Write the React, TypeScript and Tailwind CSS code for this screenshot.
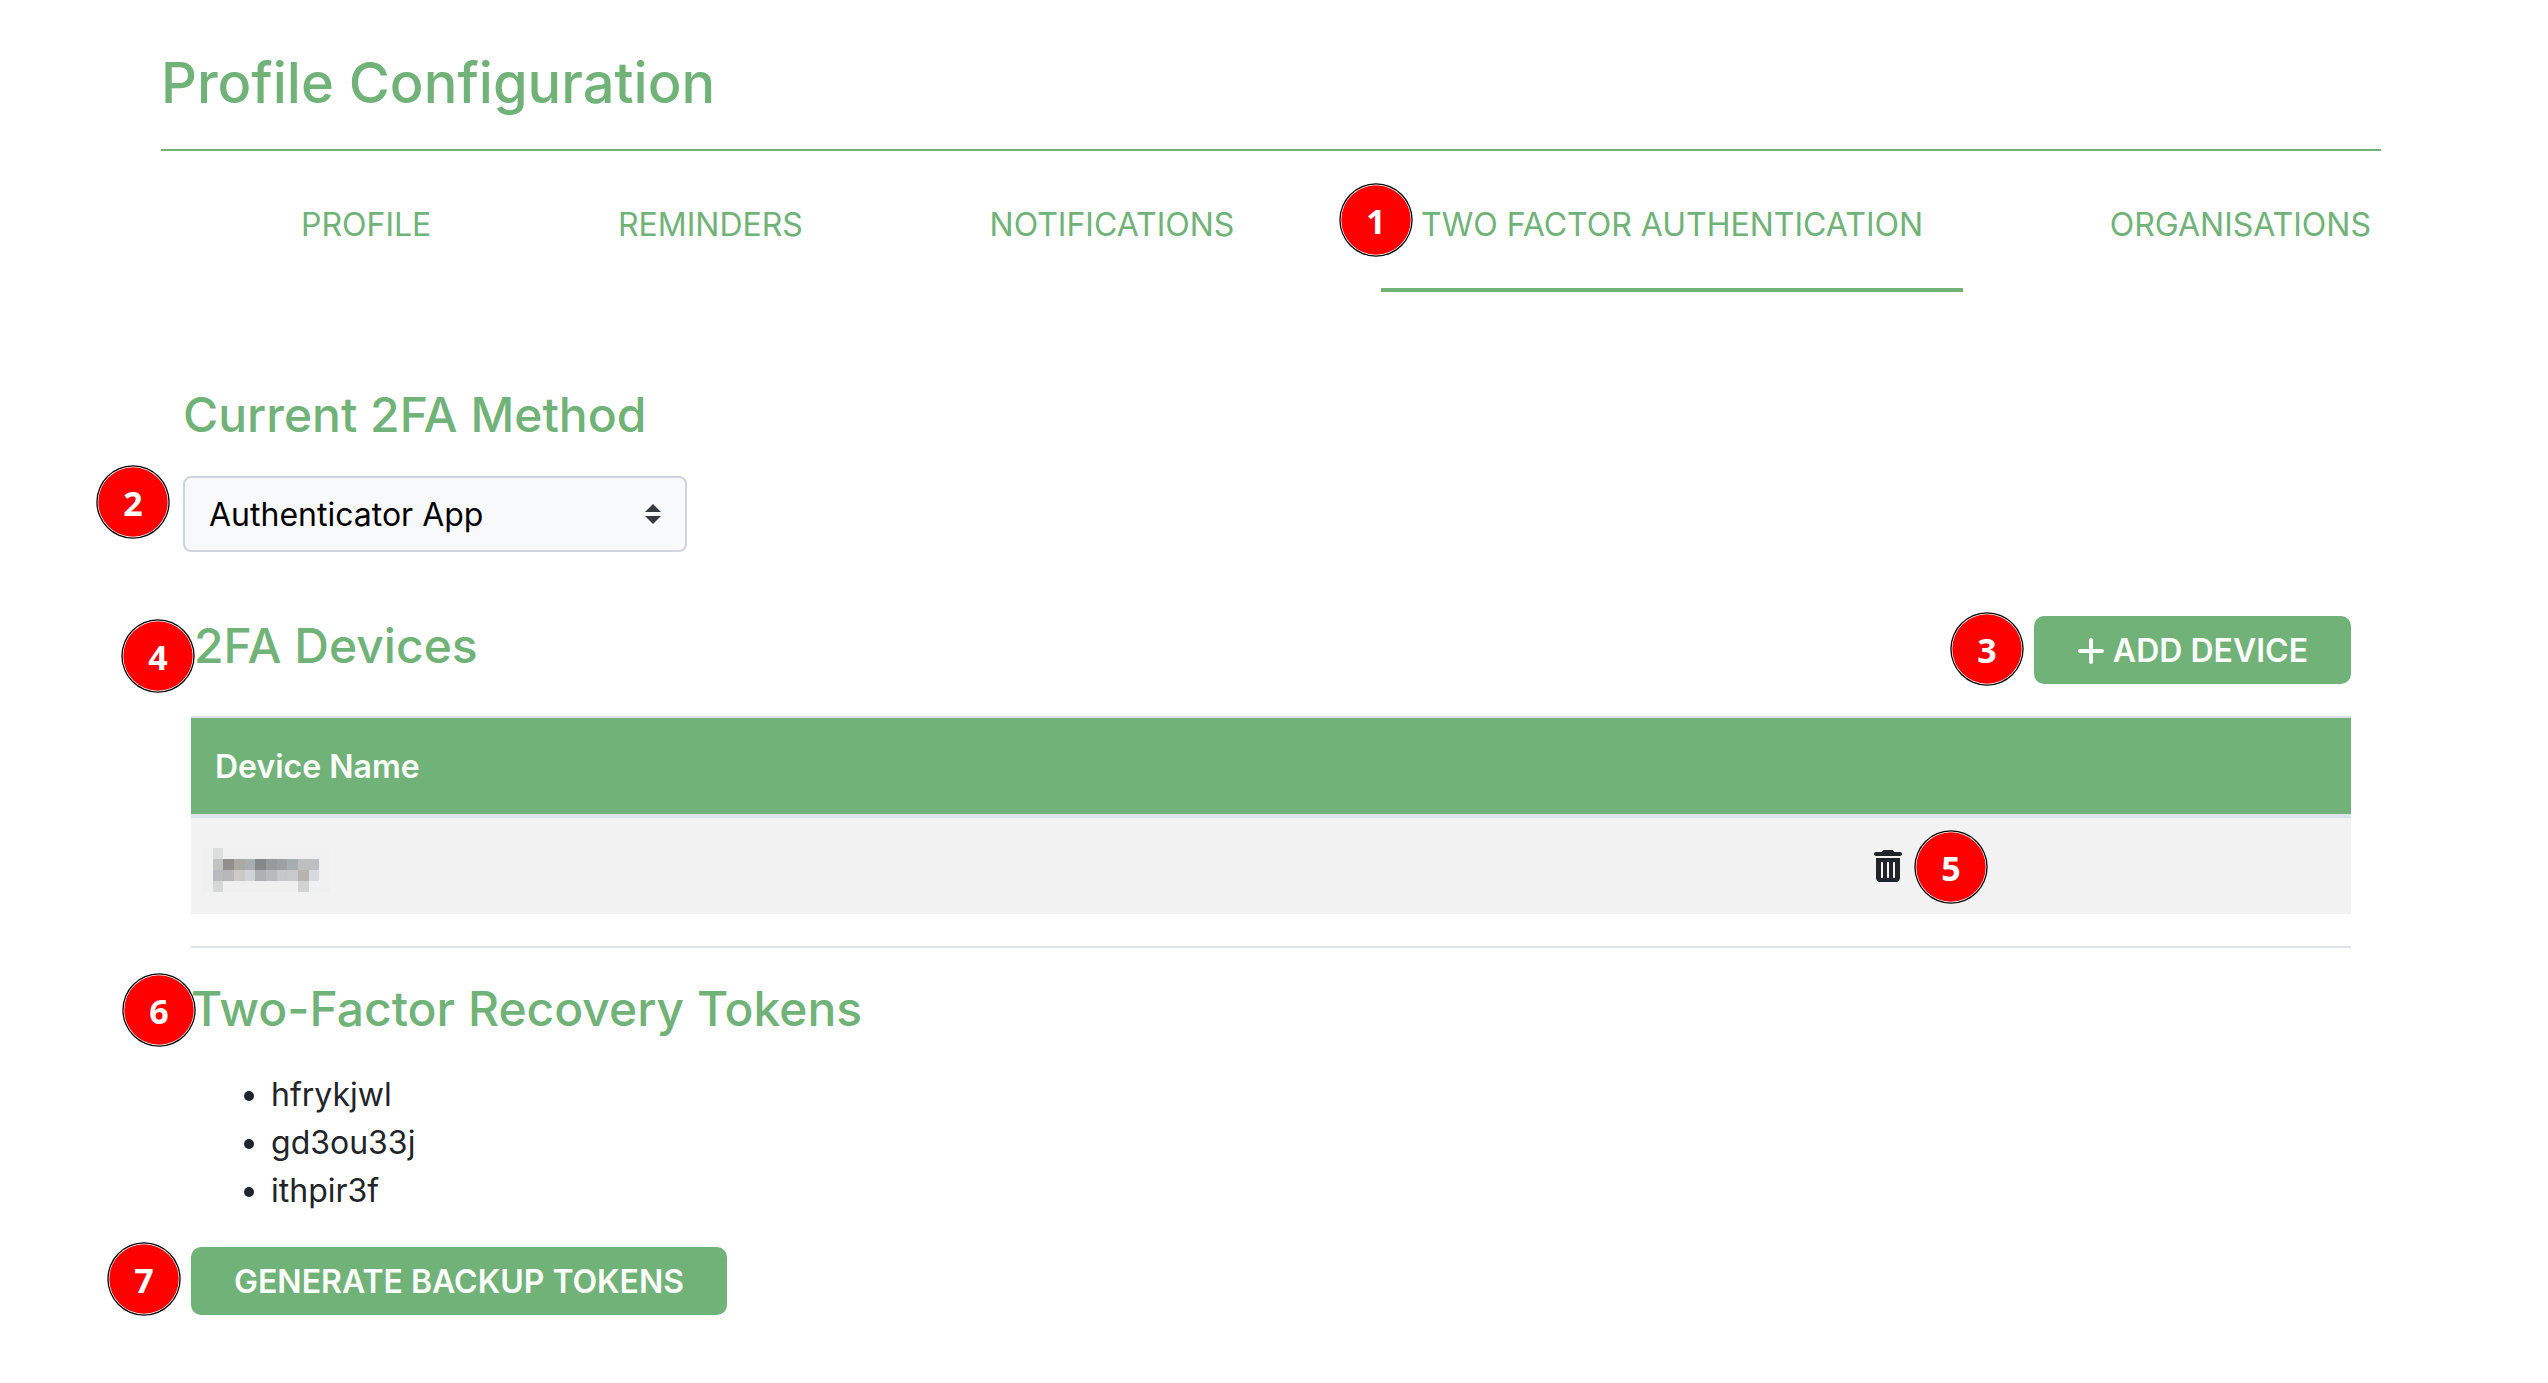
import { ReactNode } from "react";
import { FaPlus, FaTrashCan } from "react-icons/fa6";

const tabs = [
  { label: "Profile" },
  { label: "Reminders" },
  { label: "Notifications" },
  { label: "Two Factor Authentication", active: true, marker: "1" },
  { label: "Organisations" },
];

const tokens = ["hfrykjwl", "gd3ou33j", "ithpir3f"];

const redacted = [
  ["#dcdddd", "", "", "", "", "", "", "", "", ""],
  ["#c1c3c2", "#91908c", "#aba9a6", "#a9aeb1", "#87888a", "#999a9c", "#9da1a4", "#a8adb0", "#bebfbe", "#bdbfc1"],
  ["#b9bbbe", "#b8b7b7", "#cccac7", "#d1d3d7", "#afb0b3", "#b9babd", "#c4c8cb", "#c9cacc", "#b8b3b0", "#d5dbdf"],
  ["#d6d8d7", "", "", "", "", "", "", "", "#d2d2d2", "#eff2f1"],
];

function Marker({ n, place }: { n: string; place: string }) {
  return (
    <span className={`absolute z-10 grid size-[74px] place-items-center ${place}`}>
      <svg className="col-start-1 row-start-1 size-full" viewBox="0 0 74 74" aria-hidden="true">
        <circle cx="37" cy="37" r="36.7" fill="#000" />
        <circle cx="37" cy="37" r="35.4" fill="#fff" />
        <circle cx="37" cy="37" r="34.7" fill="#f00" />
      </svg>
      <span className="col-start-1 row-start-1 pt-0.5 font-['Noto_Sans'] text-[34px] leading-[48px] font-bold text-white">
        {n}
      </span>
    </span>
  );
}

function Heading({ children }: { children: ReactNode }) {
  return <h2 className="text-[48px] leading-[60px] font-medium text-[#70b277]">{children}</h2>;
}

function RedactedName() {
  return (
    <svg
      className="-ml-[13px] h-11 w-32"
      viewBox="0 0 12 4"
      preserveAspectRatio="none"
      shapeRendering="crispEdges"
      role="img"
      aria-label="Redacted device name"
    >
      <rect width="12" height="4" fill="#f0f0f0" />
      {redacted.map((row, y) =>
        row.map((c, x) => (c ? <rect key={`${x}-${y}`} x={x + 1} y={y} width="1" height="1" fill={c} /> : null)),
      )}
    </svg>
  );
}

export default function App() {
  return (
    <main className="bg-white pt-[50px] pr-[167px] pb-16 pl-[161px] font-['Inter',sans-serif] text-[32px] leading-[48px] text-[#212529]">
      <h1 className="border-b-2 border-[#70b277] pb-8 text-[56px] leading-[67px] font-medium text-[#70b277]">
        Profile Configuration
      </h1>

      <nav className="mt-[9px] -mr-[30px] flex justify-between pl-[100px]">
        {tabs.map((t) => (
          <div key={t.label} className="relative">
            {t.marker && <Marker n={t.marker} place="top-[23px] -left-[42px]" />}
            <a
              href="#"
              aria-current={t.active ? "page" : undefined}
              className={`block border-b-4 px-10 pt-[41px] pb-[39px] whitespace-nowrap text-[#70b277] uppercase ${t.active ? "border-[#70b277]" : "border-transparent"}`}
            >
              {t.label}
            </a>
          </div>
        ))}
      </nav>

      <section className="mt-[93px] pl-[22px]">
        <Heading>
          <label htmlFor="method">Current 2FA Method</label>
        </Heading>
        <div className="relative mt-[31px] w-[504px]">
          <Marker n="2" place="-top-[11px] -left-[87px]" />
          <select
            id="method"
            className="h-[76px] w-full appearance-none rounded-lg border-2 border-[#ced4da] bg-[#f8f9fb] px-6 pt-0.5 text-black"
          >
            <option>Authenticator App</option>
          </select>
          <svg className="pointer-events-none absolute top-7 right-[26px] h-5 w-4" viewBox="0 0 4 5" fill="#343a40">
            <path d="M2 0L0 2h4zm0 5L0 3h4z" />
          </svg>
        </div>
      </section>

      <section className="mt-16 pr-[30px] pl-[30px]">
        <div className="relative flex items-start justify-between pl-[3px]">
          <Marker n="4" place="top-[3px] -left-[70px]" />
          <Heading>2FA Devices</Heading>
          <div className="relative">
            <Marker n="3" place="-top-1 -left-[84px]" />
            <button className="flex h-[68px] items-center gap-2 rounded-[10px] bg-[#70b277] px-[43px] pt-px font-semibold text-white uppercase">
              <FaPlus className="h-8 w-7" />
              Add Device
            </button>
          </div>
        </div>

        <table className="mt-8 w-full border-t-2 border-[#dee2e6] text-left">
          <thead>
            <tr className="border-b-4 border-[#dee2e6] bg-[#70b277] text-white">
              <th className="px-6 pt-[25px] pb-[23px] font-semibold">Device Name</th>
              <th className="w-[501px] p-6" aria-label="Actions" />
            </tr>
          </thead>
          <tbody>
            <tr className="bg-[#f2f2f2]">
              <td className="px-6 pt-[30px] pb-[22px]">
                <RedactedName />
              </td>
              <td className="p-6">
                <div className="relative flex h-12 items-center">
                  <button aria-label="Delete device">
                    <FaTrashCan className="h-8 w-7" />
                  </button>
                  <Marker n="5" place="-top-3 left-[40px]" />
                </div>
              </td>
            </tr>
          </tbody>
        </table>

        <hr className="mt-8 border-t-2 border-[#dee2e6]" />

        <div className="relative mt-[31px]">
          <Marker n="6" place="-top-[6px] -left-[69px]" />
          <Heading>Two-Factor Recovery Tokens</Heading>
        </div>
        <ul className="mt-8 list-disc pl-20">
          {tokens.map((t) => (
            <li key={t}>{t}</li>
          ))}
        </ul>
        <div className="relative mt-8">
          <Marker n="7" place="-top-[5px] -left-[84px]" />
          <button className="h-[68px] rounded-[10px] bg-[#70b277] px-[43px] pt-px font-semibold text-white uppercase">
            Generate Backup Tokens
          </button>
        </div>
      </section>
    </main>
  );
}
